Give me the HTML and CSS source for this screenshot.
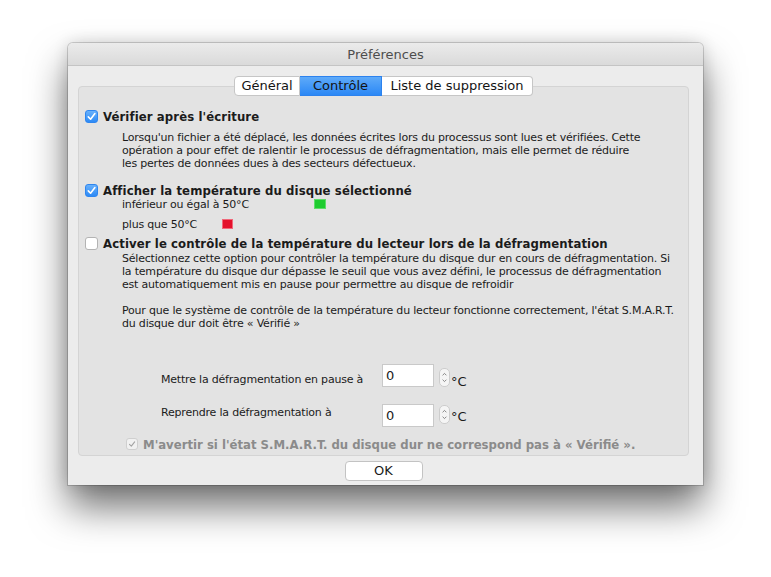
FILE: index.html
```html
<!DOCTYPE html>
<html lang="fr">
<head>
	<meta charset="UTF-8">
	<title>Préférences</title>
	<link rel="stylesheet" href="styles.css">
</head>
<body>
	<div class="window">
		<div class="titlebar">Préférences</div>
		<div class="content">
			<div class="tabs">
				<div class="tab tab-general">Général</div>
				<div class="tab tab-control selected">Contrôle</div>
				<div class="tab tab-list">Liste de suppression</div>
			</div>

			<div class="panel">
				<div class="option">
					<span class="check on">
						<svg viewBox="0 0 13 13"><path d="M3.3 6.9 L5.6 9.2 L9.9 3.6"/></svg>
					</span>
					<span>Vérifier après l'écriture</span>
				</div>
				<p class="desc desc-write">Lorsqu'un fichier a été déplacé, les données écrites lors du processus sont lues et vérifiées. Cette<br>opération a pour effet de ralentir le processus de défragmentation, mais elle permet de réduire<br>les pertes de données dues à des secteurs défectueux.</p>

				<div class="option option-temp">
					<span class="check on">
						<svg viewBox="0 0 13 13"><path d="M3.3 6.9 L5.6 9.2 L9.9 3.6"/></svg>
					</span>
					<span>Afficher la température du disque sélectionné</span>
				</div>
				<div class="legend legend-low">
					<span class="legend-label">inférieur ou égal à 50°C</span>
					<span class="swatch green"></span>
				</div>
				<div class="legend legend-high">
					<span class="legend-label">plus que 50°C</span>
					<span class="swatch red"></span>
				</div>

				<div class="option option-monitor">
					<span class="check"></span>
					<span>Activer le contrôle de la température du lecteur lors de la défragmentation</span>
				</div>
				<p class="desc desc-monitor">Sélectionnez cette option pour contrôler la température du disque dur en cours de défragmentation. Si<br>la température du disque dur dépasse le seuil que vous avez défini, le processus de défragmentation<br>est automatiquement mis en pause pour permettre au disque de refroidir<br><br>Pour que le système de contrôle de la température du lecteur fonctionne correctement, l'état S.M.A.R.T.<br>du disque dur doit être « Vérifié »</p>

				<div class="threshold threshold-pause">
					<span class="threshold-label">Mettre la défragmentation en pause à</span>
					<span class="field">0</span>
					<span class="stepper">
						<svg viewBox="0 0 11 19"><path d="M3.5 6.5 L5.5 4.5 L7.5 6.5 M3.5 12.5 L5.5 14.5 L7.5 12.5"/></svg>
					</span>
					<span class="unit">°C</span>
				</div>
				<div class="threshold threshold-resume">
					<span class="threshold-label">Reprendre la défragmentation à</span>
					<span class="field">0</span>
					<span class="stepper">
						<svg viewBox="0 0 11 19"><path d="M3.5 6.5 L5.5 4.5 L7.5 6.5 M3.5 12.5 L5.5 14.5 L7.5 12.5"/></svg>
					</span>
					<span class="unit">°C</span>
				</div>

				<div class="option option-warn disabled">
					<span class="check on-disabled">
						<svg viewBox="0 0 12 12"><path d="M3 6.4 L5.2 8.6 L9.2 3.4"/></svg>
					</span>
					<span>M'avertir si l'état S.M.A.R.T. du disque dur ne correspond pas à « Vérifié ».</span>
				</div>
			</div>

			<div class="button">OK</div>
		</div>
	</div>
</body>
</html>
```

FILE: styles.css
```css
html, body {
	padding: 0;
	margin: 0;
}

body {
	background: #fff;
	font-family: "DejaVu Sans", "Liberation Sans", sans-serif;
	color: #1b1b1b;
	height: 577px;
	overflow: hidden;
}

/*/ Window /*/

.window {
	width: 635px;
	height: 442px;
	margin: 43px 0 0 68px;
	background: #ececec;
	border-radius: 5px 5px 0 0;
	box-shadow: 0 22px 38px rgba(0, 0, 0, 0.56), 0 0 16px rgba(0, 0, 0, 0.14), 0 0 0 1px rgba(0, 0, 0, 0.16);
	display: flex;
	flex-direction: column;
}

.titlebar {
	height: 22px;
	line-height: 23px;
	text-align: center;
	font-size: 13px;
	color: #4d4d4d;
	background: linear-gradient(#ebebeb, #dadada);
	border-bottom: 1px solid #c4c4c4;
	border-radius: 5px 5px 0 0;
}

.content {
	flex: 1;
	display: flex;
	flex-direction: column;
	padding: 10px 14px 4px 10px;
}

/*/ Tabs /*/

.tabs {
	align-self: center;
	display: flex;
	height: 20px;
	margin-bottom: -10px;
	position: relative;
	z-index: 1;
}

.tab {
	box-sizing: border-box;
	height: 20px;
	line-height: 18px;
	text-align: center;
	font-size: 13px;
	color: #141414;
	background: #fff;
	border: 1px solid #c6c6c6;
	border-left: none;
}

.tab-general {
	width: 66px;
	border-left: 1px solid #c6c6c6;
	border-radius: 4px 0 0 4px;
}

.tab-control {
	width: 82px;
}

.tab-list {
	width: 151px;
	border-radius: 0 4px 4px 0;
}

.tab.selected {
	background: linear-gradient(#5eaaf9, #2b88f6);
	border-color: #2c82ee;
}

/*/ Panel /*/

.panel {
	box-sizing: border-box;
	height: 370px;
	background: #e3e3e3;
	border: 1px solid #d4d4d4;
	border-radius: 4px;
	padding: 22px 0 0 6px;
}

.option {
	display: flex;
	align-items: center;
	gap: 5px;
	height: 14px;
	font-family: "DejaVu Sans Condensed", "DejaVu Sans", sans-serif;
	font-weight: bold;
	font-size: 13px;
	letter-spacing: 0.1px;
	white-space: nowrap;
}

.check {
	box-sizing: border-box;
	width: 13px;
	height: 13px;
	flex: none;
	border-radius: 3px;
	background: #fff;
	border: 1px solid #b3b3b3;
	display: flex;
}

.check svg {
	width: 100%;
	height: 100%;
}

.check path {
	fill: none;
	stroke: #fff;
	stroke-width: 1.6;
	stroke-linecap: round;
	stroke-linejoin: round;
}

.check.on {
	background: linear-gradient(#68b1fb, #2d8af6);
	border-color: #2f86ef;
}

.check.on svg {
	margin: -1px;
	width: 13px;
	height: 13px;
}

.check.on-disabled {
	width: 12px;
	height: 12px;
	background: #f1f1f1;
	border-color: #cfcfcf;
}

.check.on-disabled path {
	stroke: #a3a3a3;
	stroke-width: 1.3;
}

.desc {
	margin: 8px 0 0 37px;
	font-size: 11px;
	line-height: 13px;
	letter-spacing: -0.2px;
	white-space: nowrap;
}

.option-temp {
	margin-top: 13px;
}

.legend {
	display: flex;
	align-items: center;
	height: 14px;
	margin-left: 37px;
	font-size: 11px;
	letter-spacing: -0.2px;
}

.legend-low .legend-label {
	width: 192px;
}

.legend-high {
	margin-top: 6px;
}

.legend-high .legend-label {
	width: 100px;
}

.swatch {
	width: 12px;
	height: 10px;
}

.swatch.green {
	background: #1ecc2f;
	box-shadow: inset 0 0 0 1px #5fdc69;
}

.swatch.red {
	width: 11px;
	background: #e4112c;
	box-shadow: inset 0 0 0 1px #f0687a;
}

.option-monitor {
	margin-top: 5px;
}

.desc-monitor {
	margin-top: 2px;
}

/*/ Thresholds /*/

.threshold {
	display: flex;
	align-items: flex-start;
	height: 23px;
	margin-left: 76px;
}

.threshold-pause {
	margin-top: 34px;
}

.threshold-resume {
	margin-top: 17px;
}

.threshold-label {
	width: 221px;
	font-size: 11px;
	line-height: 14px;
	letter-spacing: -0.2px;
}

.threshold-pause .threshold-label {
	margin-top: 9px;
}

.threshold-resume .threshold-label {
	margin-top: 2px;
}

.field {
	box-sizing: border-box;
	width: 52px;
	height: 23px;
	background: #fff;
	border: 1px solid #c9c9c9;
	font-size: 13px;
	line-height: 21px;
	padding-left: 3px;
}

.stepper {
	box-sizing: border-box;
	width: 11px;
	height: 19px;
	margin-left: 5px;
	border: 1px solid #cdcdcd;
	border-radius: 5px;
	background: #f5f5f5;
	display: flex;
}

.stepper svg {
	width: 100%;
	height: 100%;
}

.stepper path {
	fill: none;
	stroke: #6f6f6f;
	stroke-width: 1;
	stroke-linecap: round;
	stroke-linejoin: round;
}

.threshold-pause .stepper {
	margin-top: 4px;
}

.threshold-resume .stepper {
	margin-top: 1px;
}

.unit {
	font-size: 13px;
	line-height: 14px;
	margin-left: 1px;
}

.threshold-pause .unit {
	margin-top: 11px;
}

.threshold-resume .unit {
	margin-top: 6px;
}

.option-warn {
	margin: 10px 0 0 41px;
	letter-spacing: 0;
}

.option.disabled {
	color: #8b8b8b;
}

/*/ Button /*/

.button {
	align-self: center;
	box-sizing: border-box;
	width: 78px;
	height: 20px;
	margin-top: 5px;
	background: #fff;
	border: 1px solid #c3c3c3;
	border-radius: 4px;
	text-align: center;
	font-size: 13px;
	line-height: 18px;
}
```
